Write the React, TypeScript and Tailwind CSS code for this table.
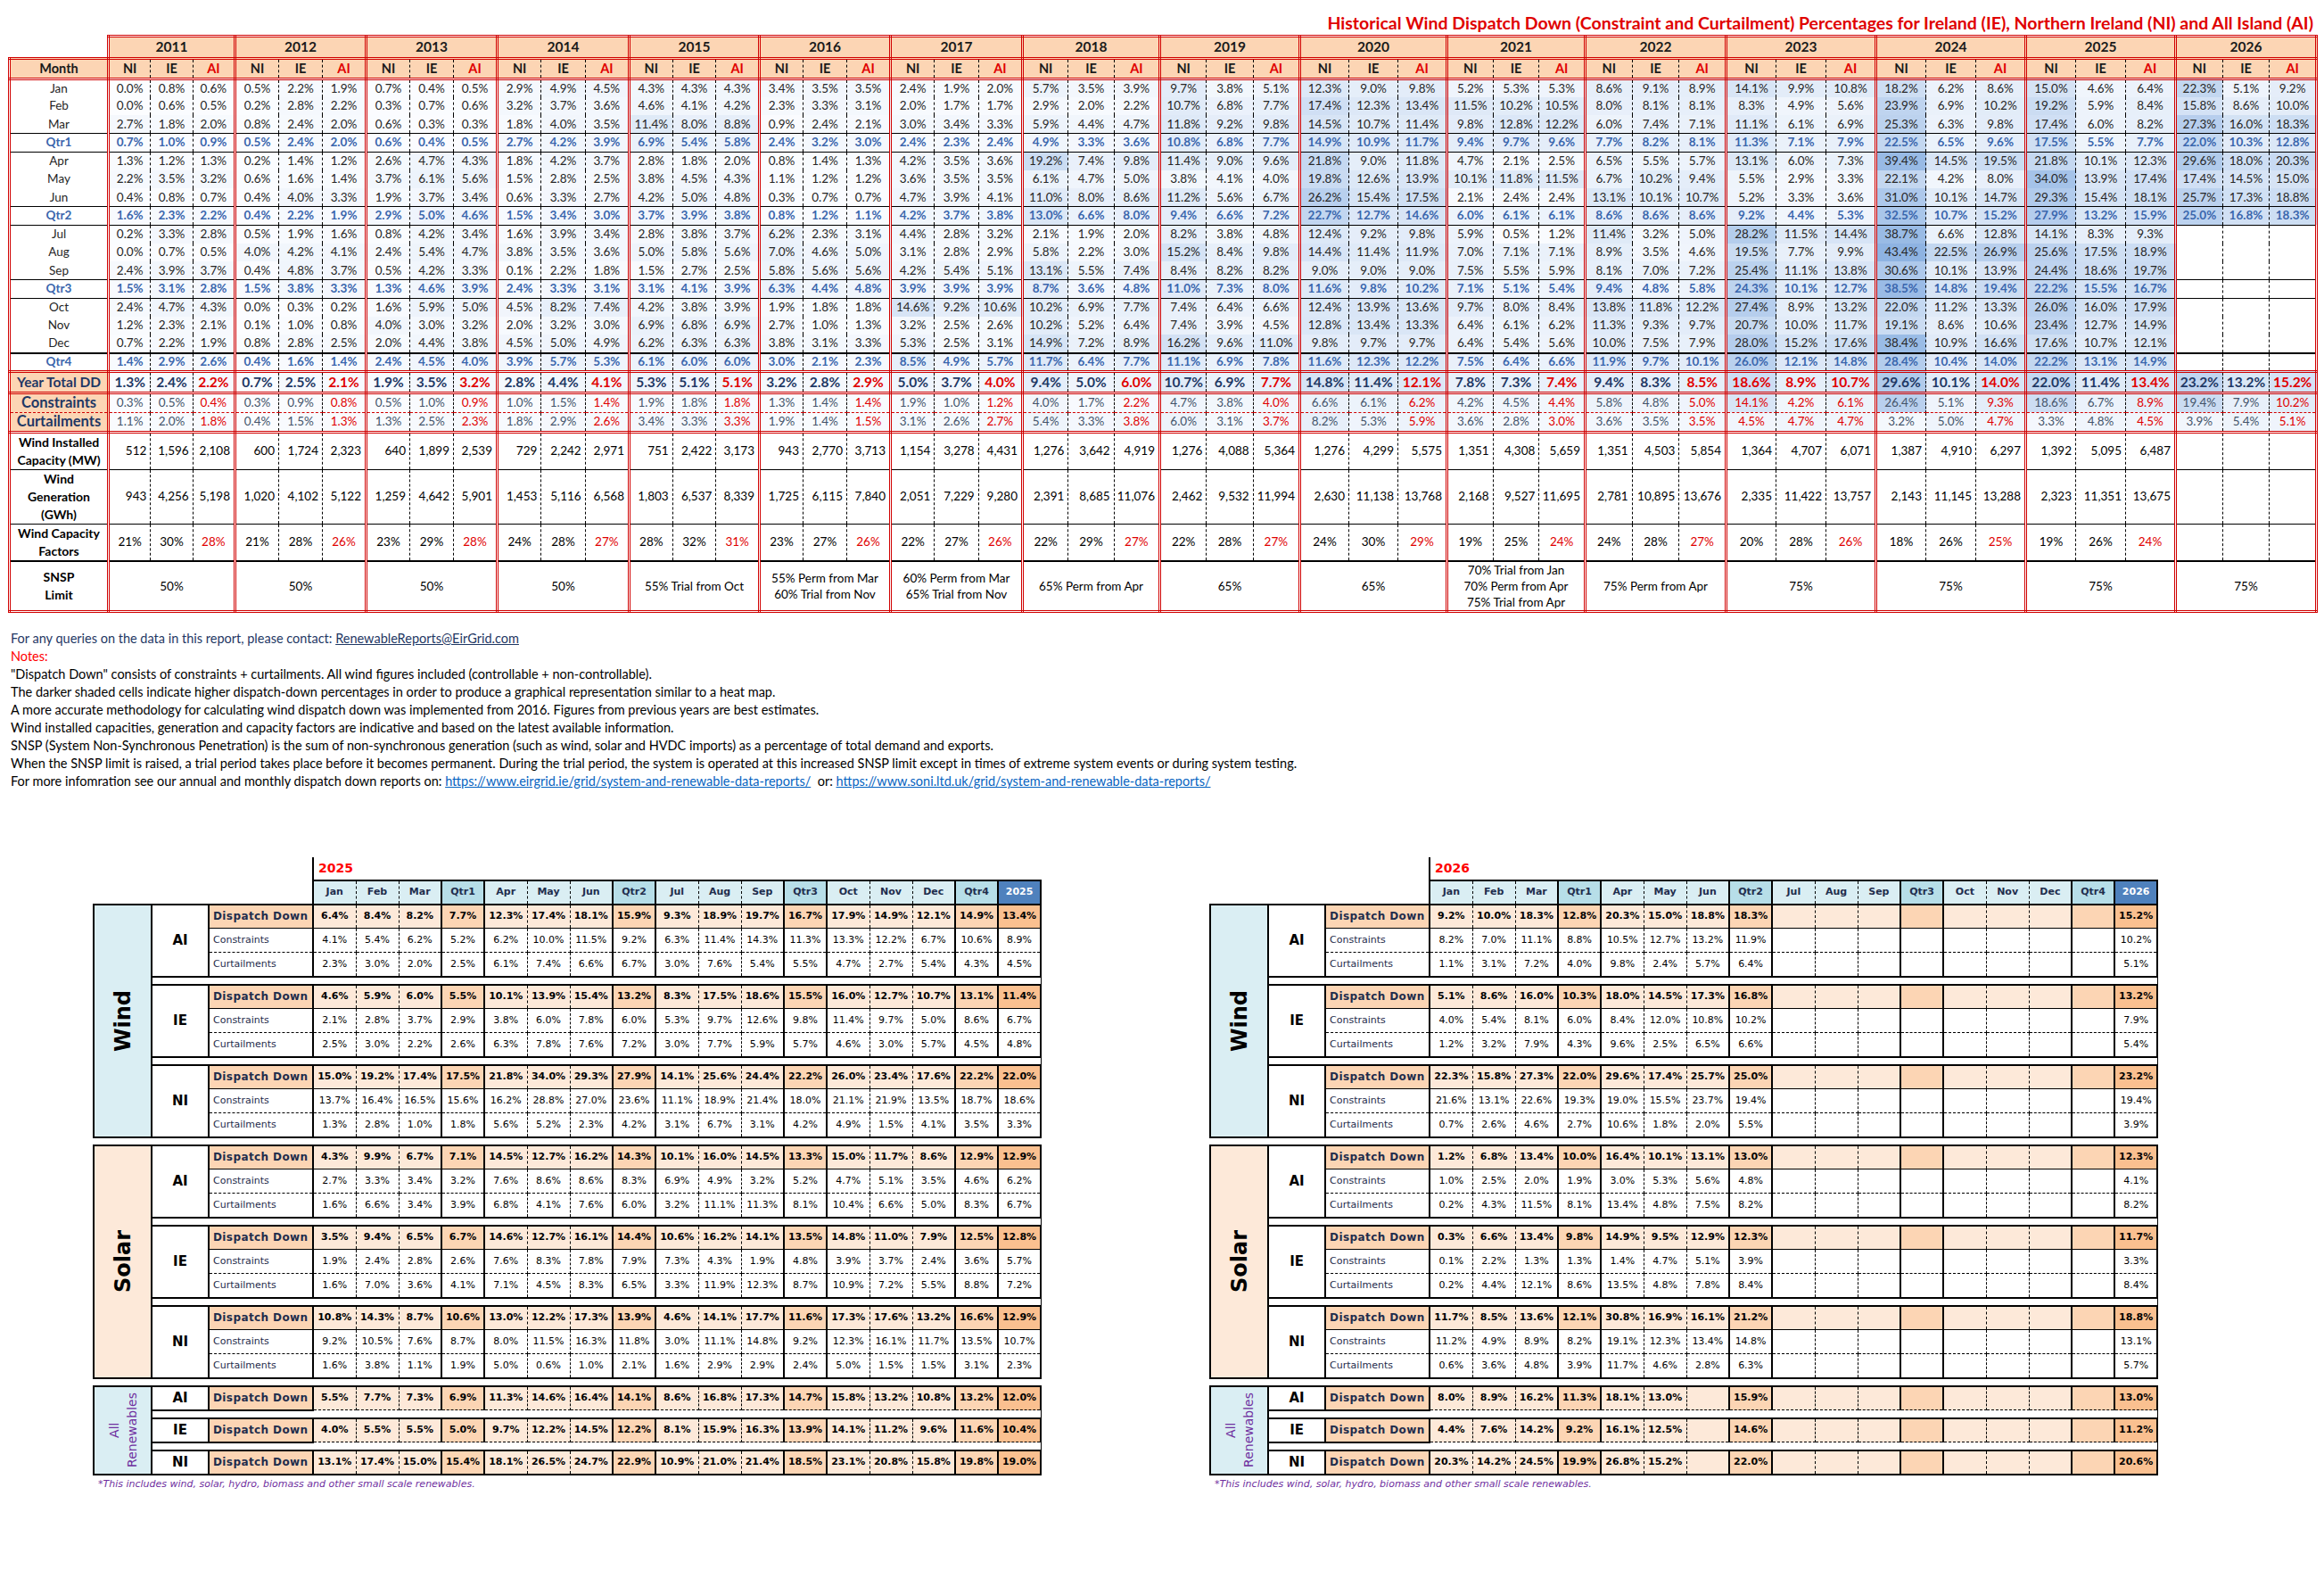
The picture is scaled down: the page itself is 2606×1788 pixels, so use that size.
import React from "react";

const LABELS = ["Jan", "Feb", "Mar", "Qtr1", "Apr", "May", "Jun", "Qtr2", "Jul", "Aug", "Sep", "Qtr3", "Oct", "Nov", "Dec", "Qtr4"];

const RED_R = "[border-right:3px_double_#d00000]";
const RED_L = "[border-left:3px_double_#d00000]";
const RED_B = "[border-bottom:3px_double_#d00000]";
const RED_T = "[border-top:3px_double_#d00000]";
const DASH_R = "[border-right:1px_dashed_#000]";

type Year = {
  year: string;
  w: string;
  pct: string;
  inst: string;
  gen: string;
  cf: string;
  snsp: string[];
  allRed?: boolean;
};

const YEARS: Year[] = [
  { year: "2011", w: "w-[142px]", inst: "512 1,596 2,108", gen: "943 4,256 5,198", cf: "21 30 28", snsp: ["50%"],
    pct: "0.0 0.8 0.6|0.0 0.6 0.5|2.7 1.8 2.0|0.7 1.0 0.9|1.3 1.2 1.3|2.2 3.5 3.2|0.4 0.8 0.7|1.6 2.3 2.2|0.2 3.3 2.8|0.0 0.7 0.5|2.4 3.9 3.7|1.5 3.1 2.8|2.4 4.7 4.3|1.2 2.3 2.1|0.7 2.2 1.9|1.4 2.9 2.6|1.3 2.4 2.2|0.3 0.5 0.4|1.1 2.0 1.8" },
  { year: "2012", w: "w-[147px]", inst: "600 1,724 2,323", gen: "1,020 4,102 5,122", cf: "21 28 26", snsp: ["50%"],
    pct: "0.5 2.2 1.9|0.2 2.8 2.2|0.8 2.4 2.0|0.5 2.4 2.0|0.2 1.4 1.2|0.6 1.6 1.4|0.4 4.0 3.3|0.4 2.2 1.9|0.5 1.9 1.6|4.0 4.2 4.1|0.4 4.8 3.7|1.5 3.8 3.3|0.0 0.3 0.2|0.1 1.0 0.8|0.8 2.8 2.5|0.4 1.6 1.4|0.7 2.5 2.1|0.3 0.9 0.8|0.4 1.5 1.3" },
  { year: "2013", w: "w-[147px]", inst: "640 1,899 2,539", gen: "1,259 4,642 5,901", cf: "23 29 28", snsp: ["50%"],
    pct: "0.7 0.4 0.5|0.3 0.7 0.6|0.6 0.3 0.3|0.6 0.4 0.5|2.6 4.7 4.3|3.7 6.1 5.6|1.9 3.7 3.4|2.9 5.0 4.6|0.8 4.2 3.4|2.4 5.4 4.7|0.5 4.2 3.3|1.3 4.6 3.9|1.6 5.9 5.0|4.0 3.0 3.2|2.0 4.4 3.8|2.4 4.5 4.0|1.9 3.5 3.2|0.5 1.0 0.9|1.3 2.5 2.3" },
  { year: "2014", w: "w-[148px]", inst: "729 2,242 2,971", gen: "1,453 5,116 6,568", cf: "24 28 27", snsp: ["50%"],
    pct: "2.9 4.9 4.5|3.2 3.7 3.6|1.8 4.0 3.5|2.7 4.2 3.9|1.8 4.2 3.7|1.5 2.8 2.5|0.6 3.3 2.7|1.5 3.4 3.0|1.6 3.9 3.4|3.8 3.5 3.6|0.1 2.2 1.8|2.4 3.3 3.1|4.5 8.2 7.4|2.0 3.2 3.0|4.5 5.0 4.9|3.9 5.7 5.3|2.8 4.4 4.1|1.0 1.5 1.4|1.8 2.9 2.6" },
  { year: "2015", w: "w-[146px]", inst: "751 2,422 3,173", gen: "1,803 6,537 8,339", cf: "28 32 31", snsp: ["55% Trial from Oct"],
    pct: "4.3 4.3 4.3|4.6 4.1 4.2|11.4 8.0 8.8|6.9 5.4 5.8|2.8 1.8 2.0|3.8 4.5 4.3|4.2 5.0 4.8|3.7 3.9 3.8|2.8 3.8 3.7|5.0 5.8 5.6|1.5 2.7 2.5|3.1 4.1 3.9|4.2 3.8 3.9|6.9 6.8 6.9|6.2 6.3 6.3|6.1 6.0 6.0|5.3 5.1 5.1|1.9 1.8 1.8|3.4 3.3 3.3" },
  { year: "2016", w: "w-[147px]", inst: "943 2,770 3,713", gen: "1,725 6,115 7,840", cf: "23 27 26", snsp: ["55% Perm from Mar", "60% Trial from Nov"],
    pct: "3.4 3.5 3.5|2.3 3.3 3.1|0.9 2.4 2.1|2.4 3.2 3.0|0.8 1.4 1.3|1.1 1.2 1.2|0.3 0.7 0.7|0.8 1.2 1.1|6.2 2.3 3.1|7.0 4.6 5.0|5.8 5.6 5.6|6.3 4.4 4.8|1.9 1.8 1.8|2.7 1.0 1.3|3.8 3.1 3.3|3.0 2.1 2.3|3.2 2.8 2.9|1.3 1.4 1.4|1.9 1.4 1.5" },
  { year: "2017", w: "w-[148px]", inst: "1,154 3,278 4,431", gen: "2,051 7,229 9,280", cf: "22 27 26", snsp: ["60% Perm from Mar", "65% Trial from Nov"],
    pct: "2.4 1.9 2.0|2.0 1.7 1.7|3.0 3.4 3.3|2.4 2.3 2.4|4.2 3.5 3.6|3.6 3.5 3.5|4.7 3.9 4.1|4.2 3.7 3.8|4.4 2.8 3.2|3.1 2.8 2.9|4.2 5.4 5.1|3.9 3.9 3.9|14.6 9.2 10.6|3.2 2.5 2.6|5.3 2.5 3.1|8.5 4.9 5.7|5.0 3.7 4.0|1.9 1.0 1.2|3.1 2.6 2.7" },
  { year: "2018", w: "w-[154px]", inst: "1,276 3,642 4,919", gen: "2,391 8,685 11,076", cf: "22 29 27", snsp: ["65% Perm from Apr"],
    pct: "5.7 3.5 3.9|2.9 2.0 2.2|5.9 4.4 4.7|4.9 3.3 3.6|19.2 7.4 9.8|6.1 4.7 5.0|11.0 8.0 8.6|13.0 6.6 8.0|2.1 1.9 2.0|5.8 2.2 3.0|13.1 5.5 7.4|8.7 3.6 4.8|10.2 6.9 7.7|10.2 5.2 6.4|14.9 7.2 8.9|11.7 6.4 7.7|9.4 5.0 6.0|4.0 1.7 2.2|5.4 3.3 3.8" },
  { year: "2019", w: "w-[157px]", inst: "1,276 4,088 5,364", gen: "2,462 9,532 11,994", cf: "22 28 27", snsp: ["65%"],
    pct: "9.7 3.8 5.1|10.7 6.8 7.7|11.8 9.2 9.8|10.8 6.8 7.7|11.4 9.0 9.6|3.8 4.1 4.0|11.2 5.6 6.7|9.4 6.6 7.2|8.2 3.8 4.8|15.2 8.4 9.8|8.4 8.2 8.2|11.0 7.3 8.0|7.4 6.4 6.6|7.4 3.9 4.5|16.2 9.6 11.0|11.1 6.9 7.8|10.7 6.9 7.7|4.7 3.8 4.0|6.0 3.1 3.7" },
  { year: "2020", w: "w-[165px]", inst: "1,276 4,299 5,575", gen: "2,630 11,138 13,768", cf: "24 30 29", snsp: ["65%"],
    pct: "12.3 9.0 9.8|17.4 12.3 13.4|14.5 10.7 11.4|14.9 10.9 11.7|21.8 9.0 11.8|19.8 12.6 13.9|26.2 15.4 17.5|22.7 12.7 14.6|12.4 9.2 9.8|14.4 11.4 11.9|9.0 9.0 9.0|11.6 9.8 10.2|12.4 13.9 13.6|12.8 13.4 13.3|9.8 9.7 9.7|11.6 12.3 12.2|14.8 11.4 12.1|6.6 6.1 6.2|8.2 5.3 5.9" },
  { year: "2021", w: "w-[155px]", inst: "1,351 4,308 5,659", gen: "2,168 9,527 11,695", cf: "19 25 24", snsp: ["70% Trial from Jan", "70% Perm from Apr", "75% Trial from Apr"],
    pct: "5.2 5.3 5.3|11.5 10.2 10.5|9.8 12.8 12.2|9.4 9.7 9.6|4.7 2.1 2.5|10.1 11.8 11.5|2.1 2.4 2.4|6.0 6.1 6.1|5.9 0.5 1.2|7.0 7.1 7.1|7.5 5.5 5.9|7.1 5.1 5.4|9.7 8.0 8.4|6.4 6.1 6.2|6.4 5.4 5.6|7.5 6.4 6.6|7.8 7.3 7.4|4.2 4.5 4.4|3.6 2.8 3.0" },
  { year: "2022", w: "w-[158px]", inst: "1,351 4,503 5,854", gen: "2,781 10,895 13,676", cf: "24 28 27", snsp: ["75% Perm from Apr"],
    pct: "8.6 9.1 8.9|8.0 8.1 8.1|6.0 7.4 7.1|7.7 8.2 8.1|6.5 5.5 5.7|6.7 10.2 9.4|13.1 10.1 10.7|8.6 8.6 8.6|11.4 3.2 5.0|8.9 3.5 4.6|8.1 7.0 7.2|9.4 4.8 5.8|13.8 11.8 12.2|11.3 9.3 9.7|10.0 7.5 7.9|11.9 9.7 10.1|9.4 8.3 8.5|5.8 4.8 5.0|3.6 3.5 3.5" },
  { year: "2023", w: "w-[168px]", inst: "1,364 4,707 6,071", gen: "2,335 11,422 13,757", cf: "20 28 26", snsp: ["75%"], allRed: true,
    pct: "14.1 9.9 10.8|8.3 4.9 5.6|11.1 6.1 6.9|11.3 7.1 7.9|13.1 6.0 7.3|5.5 2.9 3.3|5.2 3.3 3.6|9.2 4.4 5.3|28.2 11.5 14.4|19.5 7.7 9.9|25.4 11.1 13.8|24.3 10.1 12.7|27.4 8.9 13.2|20.7 10.0 11.7|28.0 15.2 17.6|26.0 12.1 14.8|18.6 8.9 10.7|14.1 4.2 6.1|4.5 4.7 4.7" },
  { year: "2024", w: "w-[168px]", inst: "1,387 4,910 6,297", gen: "2,143 11,145 13,288", cf: "18 26 25", snsp: ["75%"],
    pct: "18.2 6.2 8.6|23.9 6.9 10.2|25.3 6.3 9.8|22.5 6.5 9.6|39.4 14.5 19.5|22.1 4.2 8.0|31.0 10.1 14.7|32.5 10.7 15.2|38.7 6.6 12.8|43.4 22.5 26.9|30.6 10.1 13.9|38.5 14.8 19.4|22.0 11.2 13.3|19.1 8.6 10.6|38.4 10.9 16.6|28.4 10.4 14.0|29.6 10.1 14.0|26.4 5.1 9.3|3.2 5.0 4.7" },
  { year: "2025", w: "w-[168px]", inst: "1,392 5,095 6,487", gen: "2,323 11,351 13,675", cf: "19 26 24", snsp: ["75%"],
    pct: "15.0 4.6 6.4|19.2 5.9 8.4|17.4 6.0 8.2|17.5 5.5 7.7|21.8 10.1 12.3|34.0 13.9 17.4|29.3 15.4 18.1|27.9 13.2 15.9|14.1 8.3 9.3|25.6 17.5 18.9|24.4 18.6 19.7|22.2 15.5 16.7|26.0 16.0 17.9|23.4 12.7 14.9|17.6 10.7 12.1|22.2 13.1 14.9|22.0 11.4 13.4|18.6 6.7 8.9|3.3 4.8 4.5" },
  { year: "2026", w: "w-[158px]", inst: "- - -", gen: "- - -", cf: "- - -", snsp: ["75%"],
    pct: "22.3 5.1 9.2|15.8 8.6 10.0|27.3 16.0 18.3|22.0 10.3 12.8|29.6 18.0 20.3|17.4 14.5 15.0|25.7 17.3 18.8|25.0 16.8 18.3|- - -|- - -|- - -|- - -|- - -|- - -|- - -|- - -|23.2 13.2 15.2|19.4 7.9 10.2|3.9 5.4 5.1" },
];

const split = (s: string) => s.trim().split(/\s+/).map((v) => (v === "-" ? "" : v));

function heat(v: number) {
  const t = Math.min(v / 44, 1);
  const r = Math.round(252 - t * 112);
  const g = Math.round(253 - t * 75);
  const b = Math.round(255 - t * 29);
  return `rgb(${r},${g},${b})`;
}

function rowBottom(i: number) {
  if (i === 2 || i === 3 || i === 6 || i === 7 || i === 10 || i === 11) return "[border-bottom:1px_solid_#000]";
  if (i === 14) return "[border-bottom:2px_solid_#000]";
  if (i === 15 || i === 16 || i === 18) return RED_B;
  if (i === 17) return "[border-bottom:1px_dashed_#d00000]";
  return "";
}

function TopTable() {
  const years = YEARS.map((y) => ({ ...y, rows: y.pct.split("|").map(split) }));
  const heatCell = (v: string) => (v ? { backgroundColor: heat(parseFloat(v)) } : undefined);

  return (
    <table className="table-fixed border-collapse w-[2587px] ml-[9px] [font-family:Lato,sans-serif] text-[13.5px] leading-[17px]">
      <thead>
        <tr className="h-[24.5px]">
          <th className="w-[111px] p-0" />
          {years.map((y) => (
            <th key={y.year} colSpan={3} className={`${y.w} p-0 bg-[#fcd5b4] text-[15.5px] font-bold text-[#1a1a1a] ${RED_T} ${RED_L} ${RED_R} ${RED_B}`}>
              {y.year}
            </th>
          ))}
        </tr>
        <tr className="h-[23px]">
          <th className={`p-0 bg-[#fcd5b4] text-[14.5px] font-bold text-[#1a1a1a] ${RED_T} ${RED_L} ${RED_R} ${RED_B}`}>Month</th>
          {years.map((y) =>
            ["NI", "IE", "AI"].map((s, k) => (
              <th
                key={y.year + s}
                className={`p-0 bg-[#fcd5b4] text-[14.5px] font-bold ${RED_B} ${k === 2 ? `${RED_R} text-[#e00000]` : `${DASH_R} text-[#1a1a1a]`}`}
              >
                {s}
              </th>
            ))
          )}
        </tr>
      </thead>
      <tbody>
        {LABELS.map((lab, i) => {
          const q = lab.startsWith("Qtr");
          const bb = rowBottom(i);
          const tone = q ? "font-bold text-[#3a66ad]" : "text-[#262626]";
          return (
            <tr key={lab} className="h-[20.5px]">
              <td className={`p-0 text-center ${RED_L} ${RED_R} ${bb} ${tone}`}>{lab}</td>
              {years.map((y) =>
                y.rows[i].map((v, k) => (
                  <td key={y.year + k} style={heatCell(v)} className={`p-0 text-center whitespace-nowrap ${bb} ${k === 2 ? RED_R : DASH_R} ${tone}`}>
                    {v && `${v}%`}
                  </td>
                ))
              )}
            </tr>
          );
        })}

        {/* YEAR TOTAL */}
        <tr className="h-[24px]">
          <td className={`p-0 bg-[#fcd5b4] text-center text-[15.5px] font-bold text-[#1f3864] whitespace-nowrap ${RED_L} ${RED_R} ${RED_B}`}>Year Total DD</td>
          {years.map((y) =>
            y.rows[16].map((v, k) => (
              <td
                key={y.year + k}
                style={heatCell(v)}
                className={`p-0 text-center text-[15.5px] font-bold whitespace-nowrap ${RED_B} ${k === 2 ? RED_R : DASH_R} ${k === 2 || y.allRed ? "text-[#e00000]" : "text-[#1f3864]"}`}
              >
                {v && `${v}%`}
              </td>
            ))
          )}
        </tr>

        {/* CONSTRAINTS / CURTAILMENTS */}
        {[
          { lab: "Constraints", i: 17, h: "h-[22px]" },
          { lab: "Curtailments", i: 18, h: "h-[22px]" },
        ].map((r) => (
          <tr key={r.lab} className={r.h}>
            <td className={`p-0 bg-[#fcd5b4] text-center text-[16.5px] font-bold text-[#1f3864] whitespace-nowrap ${RED_L} ${RED_R} ${rowBottom(r.i)}`}>{r.lab}</td>
            {years.map((y) =>
              y.rows[r.i].map((v, k) => (
                <td
                  key={y.year + k}
                  style={heatCell(v)}
                  className={`p-0 text-center whitespace-nowrap ${rowBottom(r.i)} ${k === 2 ? RED_R : DASH_R} ${k === 2 || y.allRed ? "text-[#e00000]" : "text-[#44546a]"}`}
                >
                  {v && `${v}%`}
                </td>
              ))
            )}
          </tr>
        ))}

        {/* CAPACITY ROWS */}
        {[
          { lines: ["Wind Installed", "Capacity (MW)"], key: "inst" as const, h: "h-[41px]", bb: "[border-bottom:1px_solid_#000]", align: "text-right pr-[4px]" },
          { lines: ["Wind", "Generation", "(GWh)"], key: "gen" as const, h: "h-[60px]", bb: "[border-bottom:1px_solid_#000]", align: "text-right pr-[4px]" },
          { lines: ["Wind Capacity", "Factors"], key: "cf" as const, h: "h-[40px]", bb: "[border-bottom:2px_solid_#000]", align: "text-center" },
        ].map((r) => (
          <tr key={r.key} className={r.h}>
            <td className={`p-0 text-center text-[14px] font-bold leading-[20px] text-black ${RED_L} ${RED_R} ${r.bb}`}>
              {r.lines.map((l) => (
                <div key={l}>{l}</div>
              ))}
            </td>
            {years.map((y) =>
              split(y[r.key]).map((v, k) => (
                <td
                  key={y.year + k}
                  className={`py-0 pl-0 ${r.align} whitespace-nowrap ${r.bb} ${k === 2 ? RED_R : DASH_R} ${r.key === "cf" && k === 2 ? "text-[#e00000]" : "text-black"}`}
                >
                  {v && (r.key === "cf" ? `${v}%` : v)}
                </td>
              ))
            )}
          </tr>
        ))}

        {/* SNSP */}
        <tr className="h-[56px]">
          <td className={`p-0 text-center text-[14px] font-bold leading-[20px] text-black ${RED_L} ${RED_R} ${RED_B}`}>
            <div>SNSP</div>
            <div>Limit</div>
          </td>
          {years.map((y) => (
            <td key={y.year} colSpan={3} className={`p-0 text-center leading-[18px] text-black whitespace-nowrap ${RED_R} ${RED_B}`}>
              {y.snsp.map((l) => (
                <div key={l}>{l}</div>
              ))}
            </td>
          ))}
        </tr>
      </tbody>
    </table>
  );
}

function Notes() {
  return (
    <div className="mt-[19px] pl-[12px] [font-family:Lato,sans-serif] text-[14.5px] leading-[20px] text-black">
      <div className="text-[#1f3864]">
        For any queries on the data in this report, please contact: <span className="underline">RenewableReports@EirGrid.com</span>
      </div>
      <div className="text-[#ff0000]">Notes:</div>
      <div>"Dispatch Down" consists of constraints + curtailments. All wind figures included (controllable + non-controllable).</div>
      <div>The darker shaded cells indicate higher dispatch-down percentages in order to produce a graphical representation similar to a heat map.</div>
      <div>A more accurate methodology for calculating wind dispatch down was implemented from 2016. Figures from previous years are best estimates.</div>
      <div>Wind installed capacities, generation and capacity factors are indicative and based on the latest available information.</div>
      <div>SNSP (System Non-Synchronous Penetration) is the sum of non-synchronous generation (such as wind, solar and HVDC imports) as a percentage of total demand and exports.</div>
      <div>
        When the SNSP limit is raised, a trial period takes place before it becomes permanent. During the trial period, the system is operated at this increased SNSP limit except in times of extreme system events or during system testing.
      </div>
      <div className="whitespace-pre">
        For more infomration see our annual and monthly dispatch down reports on:{" "}
        <span className="text-[#0563c1] underline">https://www.eirgrid.ie/grid/system-and-renewable-data-reports/</span>
        {"  "}or: <span className="text-[#0563c1] underline">https://www.soni.ltd.uk/grid/system-and-renewable-data-reports/</span>
      </div>
    </div>
  );
}

/* ---------- monthly breakdown tables ---------- */

type Region = { r: string; dd: string; c?: string; cu?: string };
type Section = { name: string; kind: "wind" | "solar" | "all"; regions: Region[] };

const isQ = (j: number) => j === 3 || j === 7 || j === 11 || j === 15;
const colRight = (j: number) => (j === 16 || isQ(j) || isQ(j + 1) ? "[border-right:2px_solid_#000]" : "[border-right:1px_dashed_#000]");
const ddBg = (j: number) => (j === 16 ? "bg-[#fac090]" : isQ(j) ? "bg-[#fcd5b4]" : "bg-[#fde9d9]");
const hdrBg = (j: number) => (j === 16 ? "bg-[#4f81bd] text-white" : isQ(j) ? "bg-[#b7dee8] text-[#1f2d4d]" : "bg-[#daeef3] text-[#1f2d4d]");

const DATA_2025: Section[] = [
  {
    name: "Wind",
    kind: "wind",
    regions: [
      { r: "AI", dd: "6.4 8.4 8.2 7.7 12.3 17.4 18.1 15.9 9.3 18.9 19.7 16.7 17.9 14.9 12.1 14.9 13.4", c: "4.1 5.4 6.2 5.2 6.2 10.0 11.5 9.2 6.3 11.4 14.3 11.3 13.3 12.2 6.7 10.6 8.9", cu: "2.3 3.0 2.0 2.5 6.1 7.4 6.6 6.7 3.0 7.6 5.4 5.5 4.7 2.7 5.4 4.3 4.5" },
      { r: "IE", dd: "4.6 5.9 6.0 5.5 10.1 13.9 15.4 13.2 8.3 17.5 18.6 15.5 16.0 12.7 10.7 13.1 11.4", c: "2.1 2.8 3.7 2.9 3.8 6.0 7.8 6.0 5.3 9.7 12.6 9.8 11.4 9.7 5.0 8.6 6.7", cu: "2.5 3.0 2.2 2.6 6.3 7.8 7.6 7.2 3.0 7.7 5.9 5.7 4.6 3.0 5.7 4.5 4.8" },
      { r: "NI", dd: "15.0 19.2 17.4 17.5 21.8 34.0 29.3 27.9 14.1 25.6 24.4 22.2 26.0 23.4 17.6 22.2 22.0", c: "13.7 16.4 16.5 15.6 16.2 28.8 27.0 23.6 11.1 18.9 21.4 18.0 21.1 21.9 13.5 18.7 18.6", cu: "1.3 2.8 1.0 1.8 5.6 5.2 2.3 4.2 3.1 6.7 3.1 4.2 4.9 1.5 4.1 3.5 3.3" },
    ],
  },
  {
    name: "Solar",
    kind: "solar",
    regions: [
      { r: "AI", dd: "4.3 9.9 6.7 7.1 14.5 12.7 16.2 14.3 10.1 16.0 14.5 13.3 15.0 11.7 8.6 12.9 12.9", c: "2.7 3.3 3.4 3.2 7.6 8.6 8.6 8.3 6.9 4.9 3.2 5.2 4.7 5.1 3.5 4.6 6.2", cu: "1.6 6.6 3.4 3.9 6.8 4.1 7.6 6.0 3.2 11.1 11.3 8.1 10.4 6.6 5.0 8.3 6.7" },
      { r: "IE", dd: "3.5 9.4 6.5 6.7 14.6 12.7 16.1 14.4 10.6 16.2 14.1 13.5 14.8 11.0 7.9 12.5 12.8", c: "1.9 2.4 2.8 2.6 7.6 8.3 7.8 7.9 7.3 4.3 1.9 4.8 3.9 3.7 2.4 3.6 5.7", cu: "1.6 7.0 3.6 4.1 7.1 4.5 8.3 6.5 3.3 11.9 12.3 8.7 10.9 7.2 5.5 8.8 7.2" },
      { r: "NI", dd: "10.8 14.3 8.7 10.6 13.0 12.2 17.3 13.9 4.6 14.1 17.7 11.6 17.3 17.6 13.2 16.6 12.9", c: "9.2 10.5 7.6 8.7 8.0 11.5 16.3 11.8 3.0 11.1 14.8 9.2 12.3 16.1 11.7 13.5 10.7", cu: "1.6 3.8 1.1 1.9 5.0 0.6 1.0 2.1 1.6 2.9 2.9 2.4 5.0 1.5 1.5 3.1 2.3" },
    ],
  },
  {
    name: "All Renewables",
    kind: "all",
    regions: [
      { r: "AI", dd: "5.5 7.7 7.3 6.9 11.3 14.6 16.4 14.1 8.6 16.8 17.3 14.7 15.8 13.2 10.8 13.2 12.0" },
      { r: "IE", dd: "4.0 5.5 5.5 5.0 9.7 12.2 14.5 12.2 8.1 15.9 16.3 13.9 14.1 11.2 9.6 11.6 10.4" },
      { r: "NI", dd: "13.1 17.4 15.0 15.4 18.1 26.5 24.7 22.9 10.9 21.0 21.4 18.5 23.1 20.8 15.8 19.8 19.0" },
    ],
  },
];

const E8 = "- - - - - - - -";
const DATA_2026: Section[] = [
  {
    name: "Wind",
    kind: "wind",
    regions: [
      { r: "AI", dd: `9.2 10.0 18.3 12.8 20.3 15.0 18.8 18.3 ${E8} 15.2`, c: `8.2 7.0 11.1 8.8 10.5 12.7 13.2 11.9 ${E8} 10.2`, cu: `1.1 3.1 7.2 4.0 9.8 2.4 5.7 6.4 ${E8} 5.1` },
      { r: "IE", dd: `5.1 8.6 16.0 10.3 18.0 14.5 17.3 16.8 ${E8} 13.2`, c: `4.0 5.4 8.1 6.0 8.4 12.0 10.8 10.2 ${E8} 7.9`, cu: `1.2 3.2 7.9 4.3 9.6 2.5 6.5 6.6 ${E8} 5.4` },
      { r: "NI", dd: `22.3 15.8 27.3 22.0 29.6 17.4 25.7 25.0 ${E8} 23.2`, c: `21.6 13.1 22.6 19.3 19.0 15.5 23.7 19.4 ${E8} 19.4`, cu: `0.7 2.6 4.6 2.7 10.6 1.8 2.0 5.5 ${E8} 3.9` },
    ],
  },
  {
    name: "Solar",
    kind: "solar",
    regions: [
      { r: "AI", dd: `1.2 6.8 13.4 10.0 16.4 10.1 13.1 13.0 ${E8} 12.3`, c: `1.0 2.5 2.0 1.9 3.0 5.3 5.6 4.8 ${E8} 4.1`, cu: `0.2 4.3 11.5 8.1 13.4 4.8 7.5 8.2 ${E8} 8.2` },
      { r: "IE", dd: `0.3 6.6 13.4 9.8 14.9 9.5 12.9 12.3 ${E8} 11.7`, c: `0.1 2.2 1.3 1.3 1.4 4.7 5.1 3.9 ${E8} 3.3`, cu: `0.2 4.4 12.1 8.6 13.5 4.8 7.8 8.4 ${E8} 8.4` },
      { r: "NI", dd: `11.7 8.5 13.6 12.1 30.8 16.9 16.1 21.2 ${E8} 18.8`, c: `11.2 4.9 8.9 8.2 19.1 12.3 13.4 14.8 ${E8} 13.1`, cu: `0.6 3.6 4.8 3.9 11.7 4.6 2.8 6.3 ${E8} 5.7` },
    ],
  },
  {
    name: "All Renewables",
    kind: "all",
    regions: [
      { r: "AI", dd: `8.0 8.9 16.2 11.3 18.1 13.0 - 15.9 ${E8} 13.0` },
      { r: "IE", dd: `4.4 7.6 14.2 9.2 16.1 12.5 - 14.6 ${E8} 11.2` },
      { r: "NI", dd: `20.3 14.2 24.5 19.9 26.8 15.2 - 22.0 ${E8} 20.6` },
    ],
  },
];

const B2 = "[border:2px_solid_#000]";

function CategoryLabel({ s }: { s: Section }) {
  if (s.kind === "all") {
    return (
      <div className="flex items-center justify-center">
        <div className="inline-block [writing-mode:vertical-rl] rotate-180 text-center text-[14px] leading-[20px] text-[#7030a0]">
          All
          <br />
          Renewables
        </div>
      </div>
    );
  }
  return (
    <div className="flex items-center justify-center">
      <div className="inline-block [writing-mode:vertical-rl] rotate-180 text-[24px] font-bold text-black">{s.name}</div>
    </div>
  );
}

function sectionRows(s: Section, si: number, total: number) {
  const rows: React.ReactNode[] = [];
  const all = s.kind === "all";
  const span = all ? 5 : 11;
  const catBg = s.kind === "solar" ? "bg-[#fde9d9]" : "bg-[#daeef3]";

  s.regions.forEach((reg, ri) => {
    const dd = split(reg.dd);
    const last = ri === s.regions.length - 1;
    const ddBottom = all ? (last ? "[border-bottom:2px_solid_#000]" : "[border-bottom:1px_dashed_#000]") : "[border-bottom:1px_solid_#000]";

    rows.push(
      <tr key={`${s.name}-${reg.r}-dd`} className="h-[27px]">
        {ri === 0 && (
          <td rowSpan={span} className={`${catBg} ${B2} p-0`}>
            <CategoryLabel s={s} />
          </td>
        )}
        <td rowSpan={all ? 1 : 3} className={`${B2} p-0 bg-white text-center text-[15px] font-bold`}>
          {reg.r}
        </td>
        <td className={`py-0 pr-0 bg-[#fcd5b4] pl-[4px] text-[12px] font-bold tracking-[0.4px] text-[#1f2d4d] whitespace-nowrap [border-top:2px_solid_#000] [border-right:2px_solid_#000] ${all ? "[border-bottom:2px_solid_#000]" : "[border-bottom:1px_solid_#000]"}`}>
          Dispatch Down
        </td>
        {dd.map((v, j) => (
          <td key={j} className={`p-0 ${ddBg(j)} text-center font-bold whitespace-nowrap [border-top:2px_solid_#000] ${ddBottom} ${colRight(j)}`}>
            {v && `${v}%`}
          </td>
        ))}
      </tr>
    );

    if (!all) {
      [
        { lab: "Constraints", vals: split(reg.c || ""), bb: "[border-bottom:1px_dashed_#000]" },
        { lab: "Curtailments", vals: split(reg.cu || ""), bb: "[border-bottom:2px_solid_#000]" },
      ].forEach((r) => {
        rows.push(
          <tr key={`${s.name}-${reg.r}-${r.lab}`} className="h-[27px]">
            <td className={`py-0 pr-0 pl-[4px] text-[#1f2d4d] whitespace-nowrap [border-right:2px_solid_#000] ${r.bb}`}>{r.lab}</td>
            {r.vals.map((v, j) => (
              <td key={j} className={`p-0 text-center whitespace-nowrap ${r.bb} ${colRight(j)}`}>
                {v && `${v}%`}
              </td>
            ))}
          </tr>
        );
      });
    }

    if (!last) {
      rows.push(
        <tr key={`${s.name}-${reg.r}-gap`} className="h-[9px]">
          <td colSpan={19} className="p-0 [border-right:1px_solid_#000]" />
        </tr>
      );
    }
  });

  if (si < total - 1) {
    rows.push(
      <tr key={`${s.name}-sgap`} className="h-[9px]">
        <td colSpan={20} className="p-0" />
      </tr>
    );
  }
  return rows;
}

function MonthTable({ year, sections }: { year: string; sections: Section[] }) {
  const heads = [...LABELS, year];
  return (
    <div className="flex flex-col [font-family:DejaVu_Sans,Verdana,sans-serif]">
      <table className="table-fixed border-collapse w-[1062px] text-[11px] leading-[14px] text-black">
        <colgroup>
          <col className="w-[65px]" />
          <col className="w-[64px]" />
          <col className="w-[117px]" />
          {heads.map((h) => (
            <col key={h} className="w-[48px]" />
          ))}
        </colgroup>
        <tbody>
          <tr className="h-[26px]">
            <td colSpan={3} className="p-0" />
            <td colSpan={17} className="py-0 pr-0 [border-left:2px_solid_#000] pl-[5px] text-[14px] font-bold text-[#ff0000]">
              {year}
            </td>
          </tr>
          <tr className="h-[27px]">
            <td colSpan={3} className="p-0" />
            {heads.map((h, j) => (
              <td
                key={h}
                className={`p-0 text-center font-bold [border-top:2px_solid_#000] [border-bottom:2px_solid_#000] ${colRight(j)} ${j === 0 ? "[border-left:2px_solid_#000]" : ""} ${hdrBg(j)}`}
              >
                {h}
              </td>
            ))}
          </tr>
          {sections.map((s, si) => sectionRows(s, si, sections.length))}
        </tbody>
      </table>
      <div className="pl-[6px] pt-[3px] text-[11px] italic leading-[14px] text-[#7030a0]">
        *This includes wind, solar, hydro, biomass and other small scale renewables.
      </div>
    </div>
  );
}

export default function App() {
  return (
    <div className="w-[2606px] h-[1788px] overflow-hidden bg-white pt-[13px]">
      {/* TITLE */}
      <div className="h-[26px] pr-[12px] text-right [font-family:Lato,sans-serif] text-[19.5px] font-bold leading-[26px] text-[#e00000]">
        Historical Wind Dispatch Down (Constraint and Curtailment) Percentages for Ireland (IE), Northern Ireland (NI) and All Island (AI)
      </div>

      <TopTable />
      <Notes />

      {/* MONTHLY BREAKDOWN */}
      <div className="mt-[75px] flex gap-[188px] pl-[104px]">
        <MonthTable year="2025" sections={DATA_2025} />
        <MonthTable year="2026" sections={DATA_2026} />
      </div>
    </div>
  );
}
